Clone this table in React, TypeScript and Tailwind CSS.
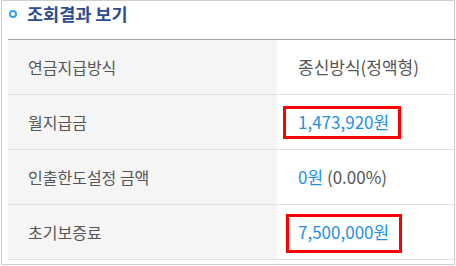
const rows: { label: string; value: React.ReactNode; box?: string }[] = [
  { label: '연금지급방식', value: <span className="text-[#555]">종신방식(정액형)</span> },
  {
    label: '월지급금',
    value: <span className="text-[#1f90e0]">1,473,920원</span>,
    box: 'left-[6px] w-[118px] top-[11px] h-[33px]',
  },
  {
    label: '인출한도설정 금액',
    value: (
      <>
        <span className="text-[#1f90e0]">0원</span> <span className="text-[#555]">(0.00%)</span>
      </>
    ),
  },
  {
    label: '초기보증료',
    value: <span className="text-[#1f90e0]">7,500,000원</span>,
    box: 'left-[9px] w-[116px] top-[9px] h-[39px]',
  },
];

export default function App() {
  return (
    <div
      className="w-[456px] h-[266px] bg-white overflow-hidden"
      style={{ fontFamily: '"Noto Sans CJK KR", "Noto Sans", sans-serif' }}
    >
      <div className="ml-px w-[454px] h-[265px] border border-[#cfcfcf] pl-[6px]">
        {/* Title */}
        <div className="h-[38px] flex items-start pt-[2px] gap-[10px]">
          <span className="mt-[7px] ml-[1px] w-[8px] h-[8px] rounded-full border-2 border-[#2ea3e6]" />
          <h2 className="text-[17.5px] font-bold text-[#2c4c8c] leading-[22px]">조회결과 보기</h2>
        </div>

        {/* Table */}
        <div className="w-[448px] border-t border-[#a0a0a0]">
          {rows.map((r) => (
            <div key={r.label} className="flex h-[55px] border-b border-[#e0e0e0]">
              <div className="w-[269px] bg-[#f5f5f5] flex items-center pl-[20px] text-[16px] text-[#555]">
                {r.label}
              </div>
              <div className="relative flex-1 flex items-center pl-[21px] text-[17px]">
                <span>{r.value}</span>
                {r.box && <span className={`absolute border-[3px] border-[#ff0000] ${r.box}`} />}
              </div>
            </div>
          ))}
        </div>
      </div>
    </div>
  );
}
